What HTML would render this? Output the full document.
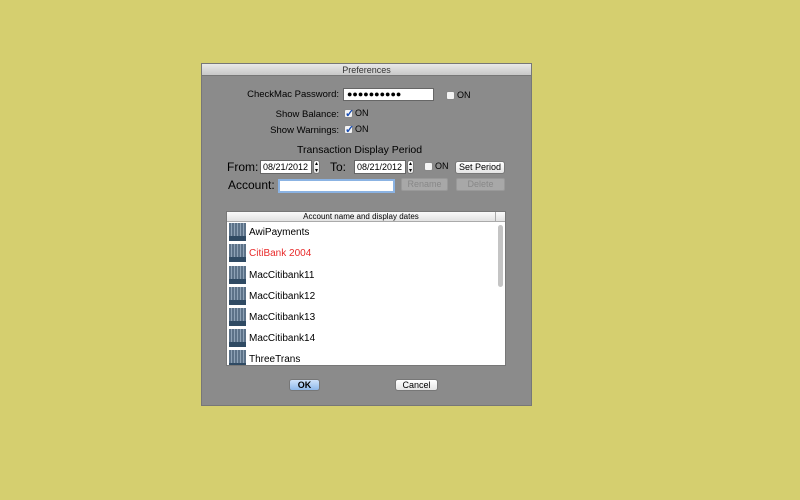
<!DOCTYPE html>
<html><head><style>
*{margin:0;padding:0;box-sizing:border-box}
body{width:800px;height:500px;background:#d5cf6f;position:relative;overflow:hidden;font-family:"Liberation Sans",sans-serif;font-size:10px;color:#000}
.a{position:absolute;white-space:nowrap}
.r{position:absolute;white-space:nowrap;text-align:right}
.win{position:absolute;left:201px;top:63px;width:331px;height:343px;background:#8b8b8b;border:1px solid #777}
.title{position:absolute;left:0;top:0;width:100%;height:12px;background:linear-gradient(#e8e8e8,#c8c8c8);border-bottom:1px solid #777;text-align:center;font-size:9px;line-height:12px;color:#333}
.field{background:#fff;border:1px solid #666}
.cb{width:9px;height:9px;background:#f4f4f4;border:1px solid #888;border-radius:2px}
.btn{background:linear-gradient(#fff,#e4e4e4);border:1px solid #777;border-radius:3px;text-align:center;font-size:9px;line-height:11px}
.dis{background:#a8a8a8;border:1px solid #999;color:#888;border-radius:2px;text-align:center;font-size:9px;line-height:11px}
.ic{position:absolute;left:2px;width:17px;height:18px;background:repeating-linear-gradient(90deg,#5c7288 0 2px,#8ea2b6 2px 3px);border-bottom:5px solid #2f4a63}
.row{position:absolute;left:0;width:270px;height:21px}
.row span{position:absolute;left:22px;top:4px;font-size:10px}
</style></head><body>
<div class="win">
<div class="title">Preferences</div>
</div>
<div class="r" style="right:461px;top:89px;font-size:9.5px">CheckMac Password:</div>
<div class="a field" style="left:343px;top:88px;width:91px;height:13px;font-size:9px;line-height:11px;padding-left:3px">●●●●●●●●●●</div>
<div class="a cb" style="left:446px;top:91px"></div><div class="a" style="left:457px;top:90px;font-size:9px">ON</div>
<div class="r" style="right:461px;top:109px;font-size:9.5px">Show Balance:</div>
<div class="a cb" style="left:344px;top:109px;color:#1a4fb5;font-size:11px;line-height:8px;font-weight:bold">✓</div><div class="a" style="left:355px;top:108px;font-size:9px">ON</div>
<div class="r" style="right:461px;top:125px;font-size:9.5px">Show Warnings:</div>
<div class="a cb" style="left:344px;top:125px;color:#1a4fb5;font-size:11px;line-height:8px;font-weight:bold">✓</div><div class="a" style="left:355px;top:124px;font-size:9px">ON</div>
<div class="a" style="left:297px;top:144px;font-size:10.5px">Transaction Display Period</div>
<div class="a" style="left:227px;top:160px;font-size:12px">From:</div>
<div class="a field" style="left:260px;top:160px;width:52px;height:14px;font-size:9px;line-height:12px;padding-left:2px">08/21/2012</div>
<div class="a btn" style="left:313px;top:160px;width:7px;height:14px;font-size:6px;line-height:7px">▴<br>▾</div>
<div class="a" style="left:330px;top:160px;font-size:12px">To:</div>
<div class="a field" style="left:354px;top:160px;width:52px;height:14px;font-size:9px;line-height:12px;padding-left:2px">08/21/2012</div>
<div class="a btn" style="left:407px;top:160px;width:7px;height:14px;font-size:6px;line-height:7px">▴<br>▾</div>
<div class="a cb" style="left:424px;top:162px"></div><div class="a" style="left:435px;top:161px;font-size:9px">ON</div>
<div class="a btn" style="left:455px;top:161px;width:50px;height:13px">Set Period</div>
<div class="a" style="left:228px;top:178px;font-size:12px">Account:</div>
<div class="a field" style="left:278px;top:179px;width:117px;height:14px;border:2px solid #8bb3e3"></div>
<div class="a dis" style="left:401px;top:178px;width:47px;height:13px">Rename</div>
<div class="a dis" style="left:456px;top:178px;width:49px;height:13px">Delete</div>
<div class="a" style="left:226px;top:211px;width:280px;height:155px;background:#fff;border:1px solid #777;overflow:hidden">
<div style="position:absolute;left:0;top:0;width:100%;height:10px;background:linear-gradient(#fafafa,#e2e2e2);border-bottom:1px solid #aaa;font-size:8px;line-height:10px;text-align:center;padding-right:10px">Account name and display dates</div>
<div style="position:absolute;left:268px;top:0;width:1px;height:10px;background:#aaa"></div>
<div style="position:absolute;left:271px;top:13px;width:5px;height:62px;background:#c4c4c4;border-radius:3px"></div>
<div class="row" style="top:11px"><div class="ic"></div><span>AwiPayments</span></div>
<div class="row" style="top:32px"><div class="ic"></div><span style="color:#e82a2a">CitiBank 2004</span></div>
<div class="row" style="top:54px"><div class="ic"></div><span>MacCitibank11</span></div>
<div class="row" style="top:75px"><div class="ic"></div><span>MacCitibank12</span></div>
<div class="row" style="top:96px"><div class="ic"></div><span>MacCitibank13</span></div>
<div class="row" style="top:117px"><div class="ic"></div><span>MacCitibank14</span></div>
<div class="row" style="top:138px"><div class="ic"></div><span>ThreeTrans</span></div>
</div>
<div class="a btn" style="left:289px;top:379px;width:31px;height:12px;background:linear-gradient(#cfe3fb,#8db8ea);font-weight:bold">OK</div>
<div class="a btn" style="left:395px;top:379px;width:43px;height:12px">Cancel</div>
</body></html>
